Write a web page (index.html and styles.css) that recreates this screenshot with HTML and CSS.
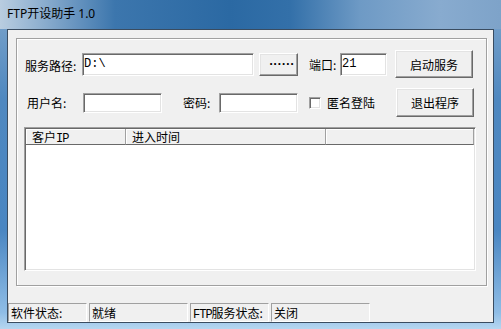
FILE: index.html
```html
<html>
<head>
  <link rel="stylesheet" href="styles.css">
</head>
<body>
  <div class="window">
    <div class="titlebar">FTP开设助手 1.0</div>
    <div class="frame">
      <div class="client">
        <div class="group">
          <div class="row row-path">
            <label class="lbl lbl-path">服务路径:</label>
            <input class="edit edit-path" type="text" value="D:\">
            <button class="btn btn-browse">......</button>
            <label class="lbl lbl-port">端口:</label>
            <input class="edit edit-port" type="text" value="21">
            <button class="btn btn-main">启动服务</button>
          </div>
          <div class="row row-user">
            <label class="lbl lbl-user">用户名:</label>
            <input class="edit edit-user" type="text">
            <label class="lbl lbl-pass">密码:</label>
            <input class="edit edit-pass" type="text">
            <span class="check"></span>
            <label class="lbl lbl-anon">匿名登陆</label>
            <button class="btn btn-main btn-exit">退出程序</button>
          </div>
          <div class="listview">
            <div class="header">
              <div class="col col-ip">客户<span class="mono">IP</span></div>
              <div class="col col-time">进入时间</div>
              <div class="col col-rest"></div>
            </div>
          </div>
        </div>
        <div class="statusbar">
          <div class="panel panel-sm">软件状态:</div>
          <div class="panel panel-lg">就绪</div>
          <div class="panel panel-sm"><span class="mono">FTP</span>服务状态:</div>
          <div class="panel panel-lg">关闭</div>
        </div>
      </div>
    </div>
  </div>
</body>
</html>
```

FILE: styles.css
```css
body {
  margin: 0;
  padding: 0;
  font-family: "Noto Sans CJK SC", sans-serif;
  font-size: 12px;
  color: #000;
}

.window {
  width: 501px;
  height: 329px;
  overflow: hidden;
  background: linear-gradient(to bottom, #7ea5cb 0%, #4f88c0 30%, #4a86c2 70%, #8fbde6 95%, #b6d6f0 100%);
}

.titlebar {
  height: 29px;
  box-sizing: border-box;
  padding: 5px 0 0 7px;
  line-height: 17px;
  font-family: "Noto Sans", "Noto Sans CJK SC", sans-serif;
  font-size: 12px;
  color: #000;
  background: linear-gradient(to right, #b9cde0 0px, #8fb0d0 40px, #3c76ad 115px, #2b69a3 230px, #3370a9 290px, #6e9ac5 360px, #88abcf 440px, #7ea3c9 500px);
}

.frame {
  height: 300px;
  box-sizing: border-box;
  padding: 0 7px 6px 7px;
}

.client {
  height: 294px;
  box-sizing: border-box;
  border: 1px solid #3a4c60;
  background: #f0f0f0;
  display: flex;
  flex-direction: column;
}

.group {
  margin: 8px 6px 0 8px;
  height: 248px;
  box-sizing: border-box;
  border: 1px solid #a0a0a0;
  box-shadow: inset 1px 1px 0 #fff, 1px 1px 0 #fff;
  padding: 11px 10px 14px 7px;
}

.row {
  display: flex;
  align-items: center;
}

.row-path {
  height: 28px;
}

.row-user {
  height: 29px;
  margin-top: 10px;
}

.lbl {
  white-space: nowrap;
  line-height: 16px;
}

.lbl-path {
  width: 57px;
  padding-left: 1px;
  margin-top: 3px;
}

.lbl-port {
  width: 31px;
  margin-left: 11px;
  margin-top: 2px;
}

.lbl-user {
  width: 56px;
  padding-left: 3px;
}

.lbl-pass {
  width: 36px;
  margin-left: 21px;
}

.lbl-anon {
  margin-left: 6px;
}

.edit {
  box-sizing: border-box;
  margin: 0;
  padding: 0 0 0 1px;
  background: #fff;
  border: 1px solid;
  border-color: #a0a0a0 #fff #fff #a0a0a0;
  box-shadow: inset 1px 1px 0 #696969, inset -1px -1px 0 #e3e3e3;
  font-family: "Liberation Mono", monospace;
  font-size: 12px;
  color: #000;
  outline: none;
}

.edit-path {
  width: 172px;
  height: 23px;
}

.edit-port {
  width: 47px;
  height: 23px;
}

.edit-user,
.edit-pass {
  width: 79px;
  height: 20px;
}

.btn {
  box-sizing: border-box;
  margin: 0;
  padding: 0;
  background: #f0f0f0;
  border: 1px solid;
  border-color: #fff #696969 #696969 #fff;
  box-shadow: inset -1px -1px 0 #a0a0a0, inset 1px 1px 0 #e3e3e3;
  font-family: "Noto Sans CJK SC", sans-serif;
  font-size: 12px;
  color: #000;
}

.btn-browse {
  width: 39px;
  height: 23px;
  margin-left: 5px;
  font-family: "Liberation Mono", monospace;
  font-weight: bold;
  letter-spacing: -3px;
  text-indent: 3px;
  line-height: 12px;
  padding-bottom: 4px;
}

.btn-main {
  width: 78px;
  height: 28px;
  margin-left: 8px;
}

.btn-exit {
  height: 29px;
  margin-left: auto;
  margin-right: 2px;
}

.check {
  width: 12px;
  height: 12px;
  box-sizing: border-box;
  margin-left: 11px;
  background: #fff;
  border: 1px solid;
  border-color: #a0a0a0 #fff #fff #a0a0a0;
  box-shadow: inset 1px 1px 0 #696969, inset -1px -1px 0 #e3e3e3;
}

.listview {
  margin-top: 10px;
  height: 144px;
  box-sizing: border-box;
  background: #fff;
  border: 1px solid;
  border-color: #a0a0a0 #fff #fff #a0a0a0;
  box-shadow: inset 1px 1px 0 #696969, inset -1px -1px 0 #e3e3e3;
  padding: 1px 0 0 1px;
}

.header {
  display: flex;
  height: 16px;
}

.col {
  box-sizing: border-box;
  height: 16px;
  line-height: 15px;
  padding-left: 6px;
  background: #f0f0f0;
  border-right: 1px solid #a0a0a0;
  border-bottom: 1px solid #696969;
  box-shadow: inset 1px 1px 0 #fff;
  white-space: nowrap;
}

.col-ip {
  width: 100px;
}

.col-time {
  width: 200px;
}

.col-rest {
  flex: 1;
  margin-right: 1px;
}

.mono {
  font-family: "Liberation Mono", monospace;
  font-size: 12px;
  letter-spacing: -1px;
}

.statusbar {
  margin-top: auto;
  display: flex;
  gap: 2px;
  height: 19px;
}

.panel {
  box-sizing: border-box;
  height: 19px;
  line-height: 17px;
  padding-left: 2px;
  border: 1px solid;
  border-color: #a0a0a0 #fff #fff #a0a0a0;
  white-space: nowrap;
  font-size: 12px;
}

.panel-sm {
  width: 79px;
}

.panel-lg {
  width: 99px;
}
```
